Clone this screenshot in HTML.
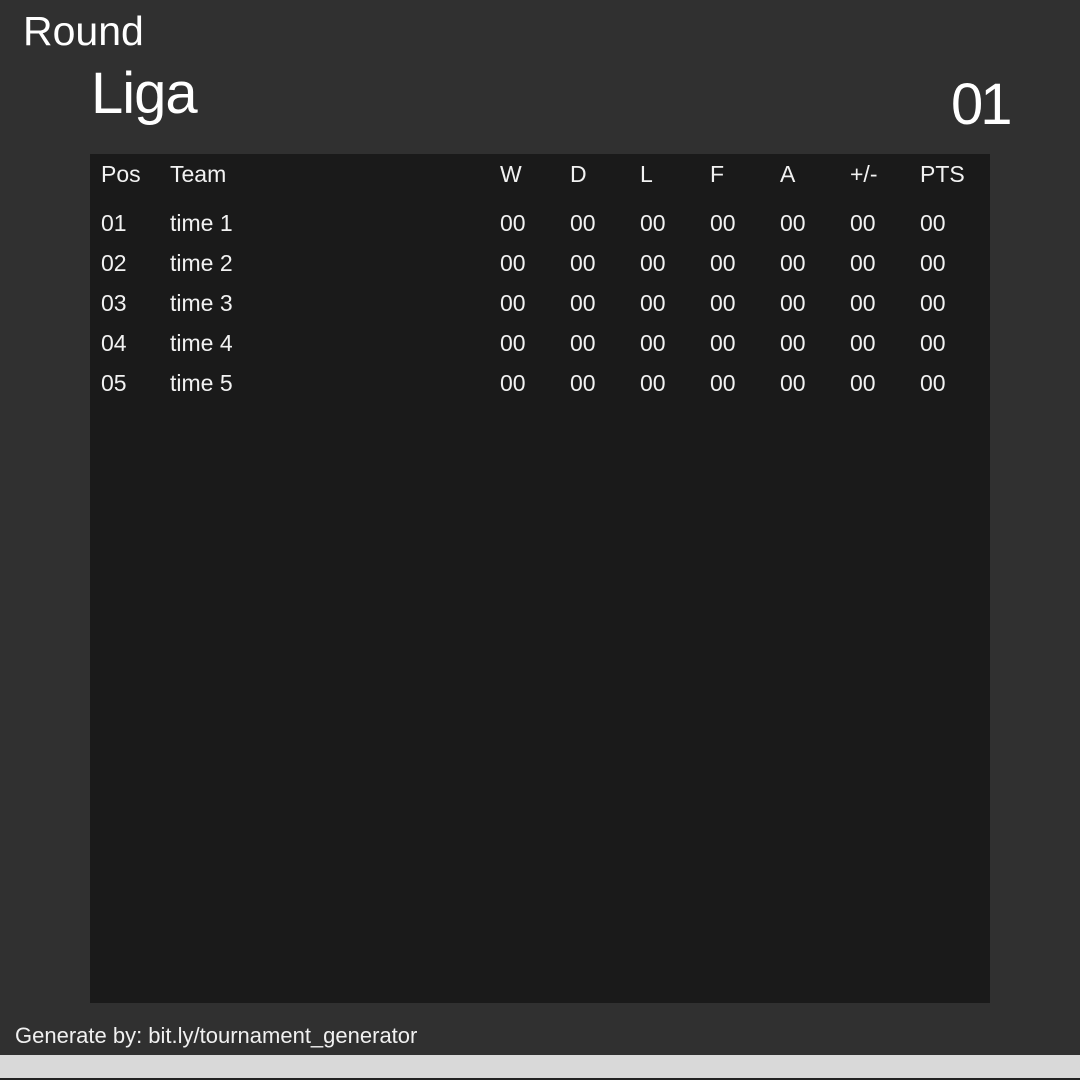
<!DOCTYPE html>
<html><head><style>
*{margin:0;padding:0}
body{width:1080px;height:1080px;background:#303030;position:relative;overflow:hidden;font-family:"Liberation Sans",sans-serif;color:#fff}
.a{position:absolute;white-space:nowrap;line-height:1}
#tbl{position:absolute;left:90px;top:154px;width:900px;height:849px;background:#1a1a1a}
.t{position:absolute;font-size:23px;line-height:1;color:#f2f2f2}
#bar{position:absolute;left:0;top:1055px;width:1080px;height:23px;background:#d9d9d9}
#bl{position:absolute;left:0;top:1078px;width:1080px;height:2px;background:#222}
</style></head><body>
<div class="a" style="left:23px;top:11px;font-size:41px">Round</div>
<div class="a" style="left:91px;top:65px;font-size:58px;letter-spacing:-1px">Liga</div>
<div class="a" style="left:951px;top:76px;font-size:58px;letter-spacing:-3px">01</div>
<div id="tbl"></div>
<div id="rows"></div>
<div class="a" style="left:15px;top:1025px;font-size:22px;color:#f0f0f0">Generate by: bit.ly/tournament_generator</div>
<div id="bar"></div><div id="bl"></div>
<div class="t" style="left:101px;top:163px">Pos</div>
<div class="t" style="left:170px;top:163px">Team</div>
<div class="t" style="left:500px;top:163px">W</div>
<div class="t" style="left:570px;top:163px">D</div>
<div class="t" style="left:640px;top:163px">L</div>
<div class="t" style="left:710px;top:163px">F</div>
<div class="t" style="left:780px;top:163px">A</div>
<div class="t" style="left:850px;top:163px">+/-</div>
<div class="t" style="left:920px;top:163px">PTS</div>
<script>
var h='';for(var r=0;r<5;r++){var y=212+r*40;
h+='<div class="t" style="left:101px;top:'+y+'px">0'+(r+1)+'</div>';
h+='<div class="t" style="left:170px;top:'+y+'px">time '+(r+1)+'</div>';
for(var c=0;c<7;c++)h+='<div class="t" style="left:'+(500+c*70)+'px;top:'+y+'px">00</div>';}
document.getElementById('rows').innerHTML=h;
</script>
</body></html>
